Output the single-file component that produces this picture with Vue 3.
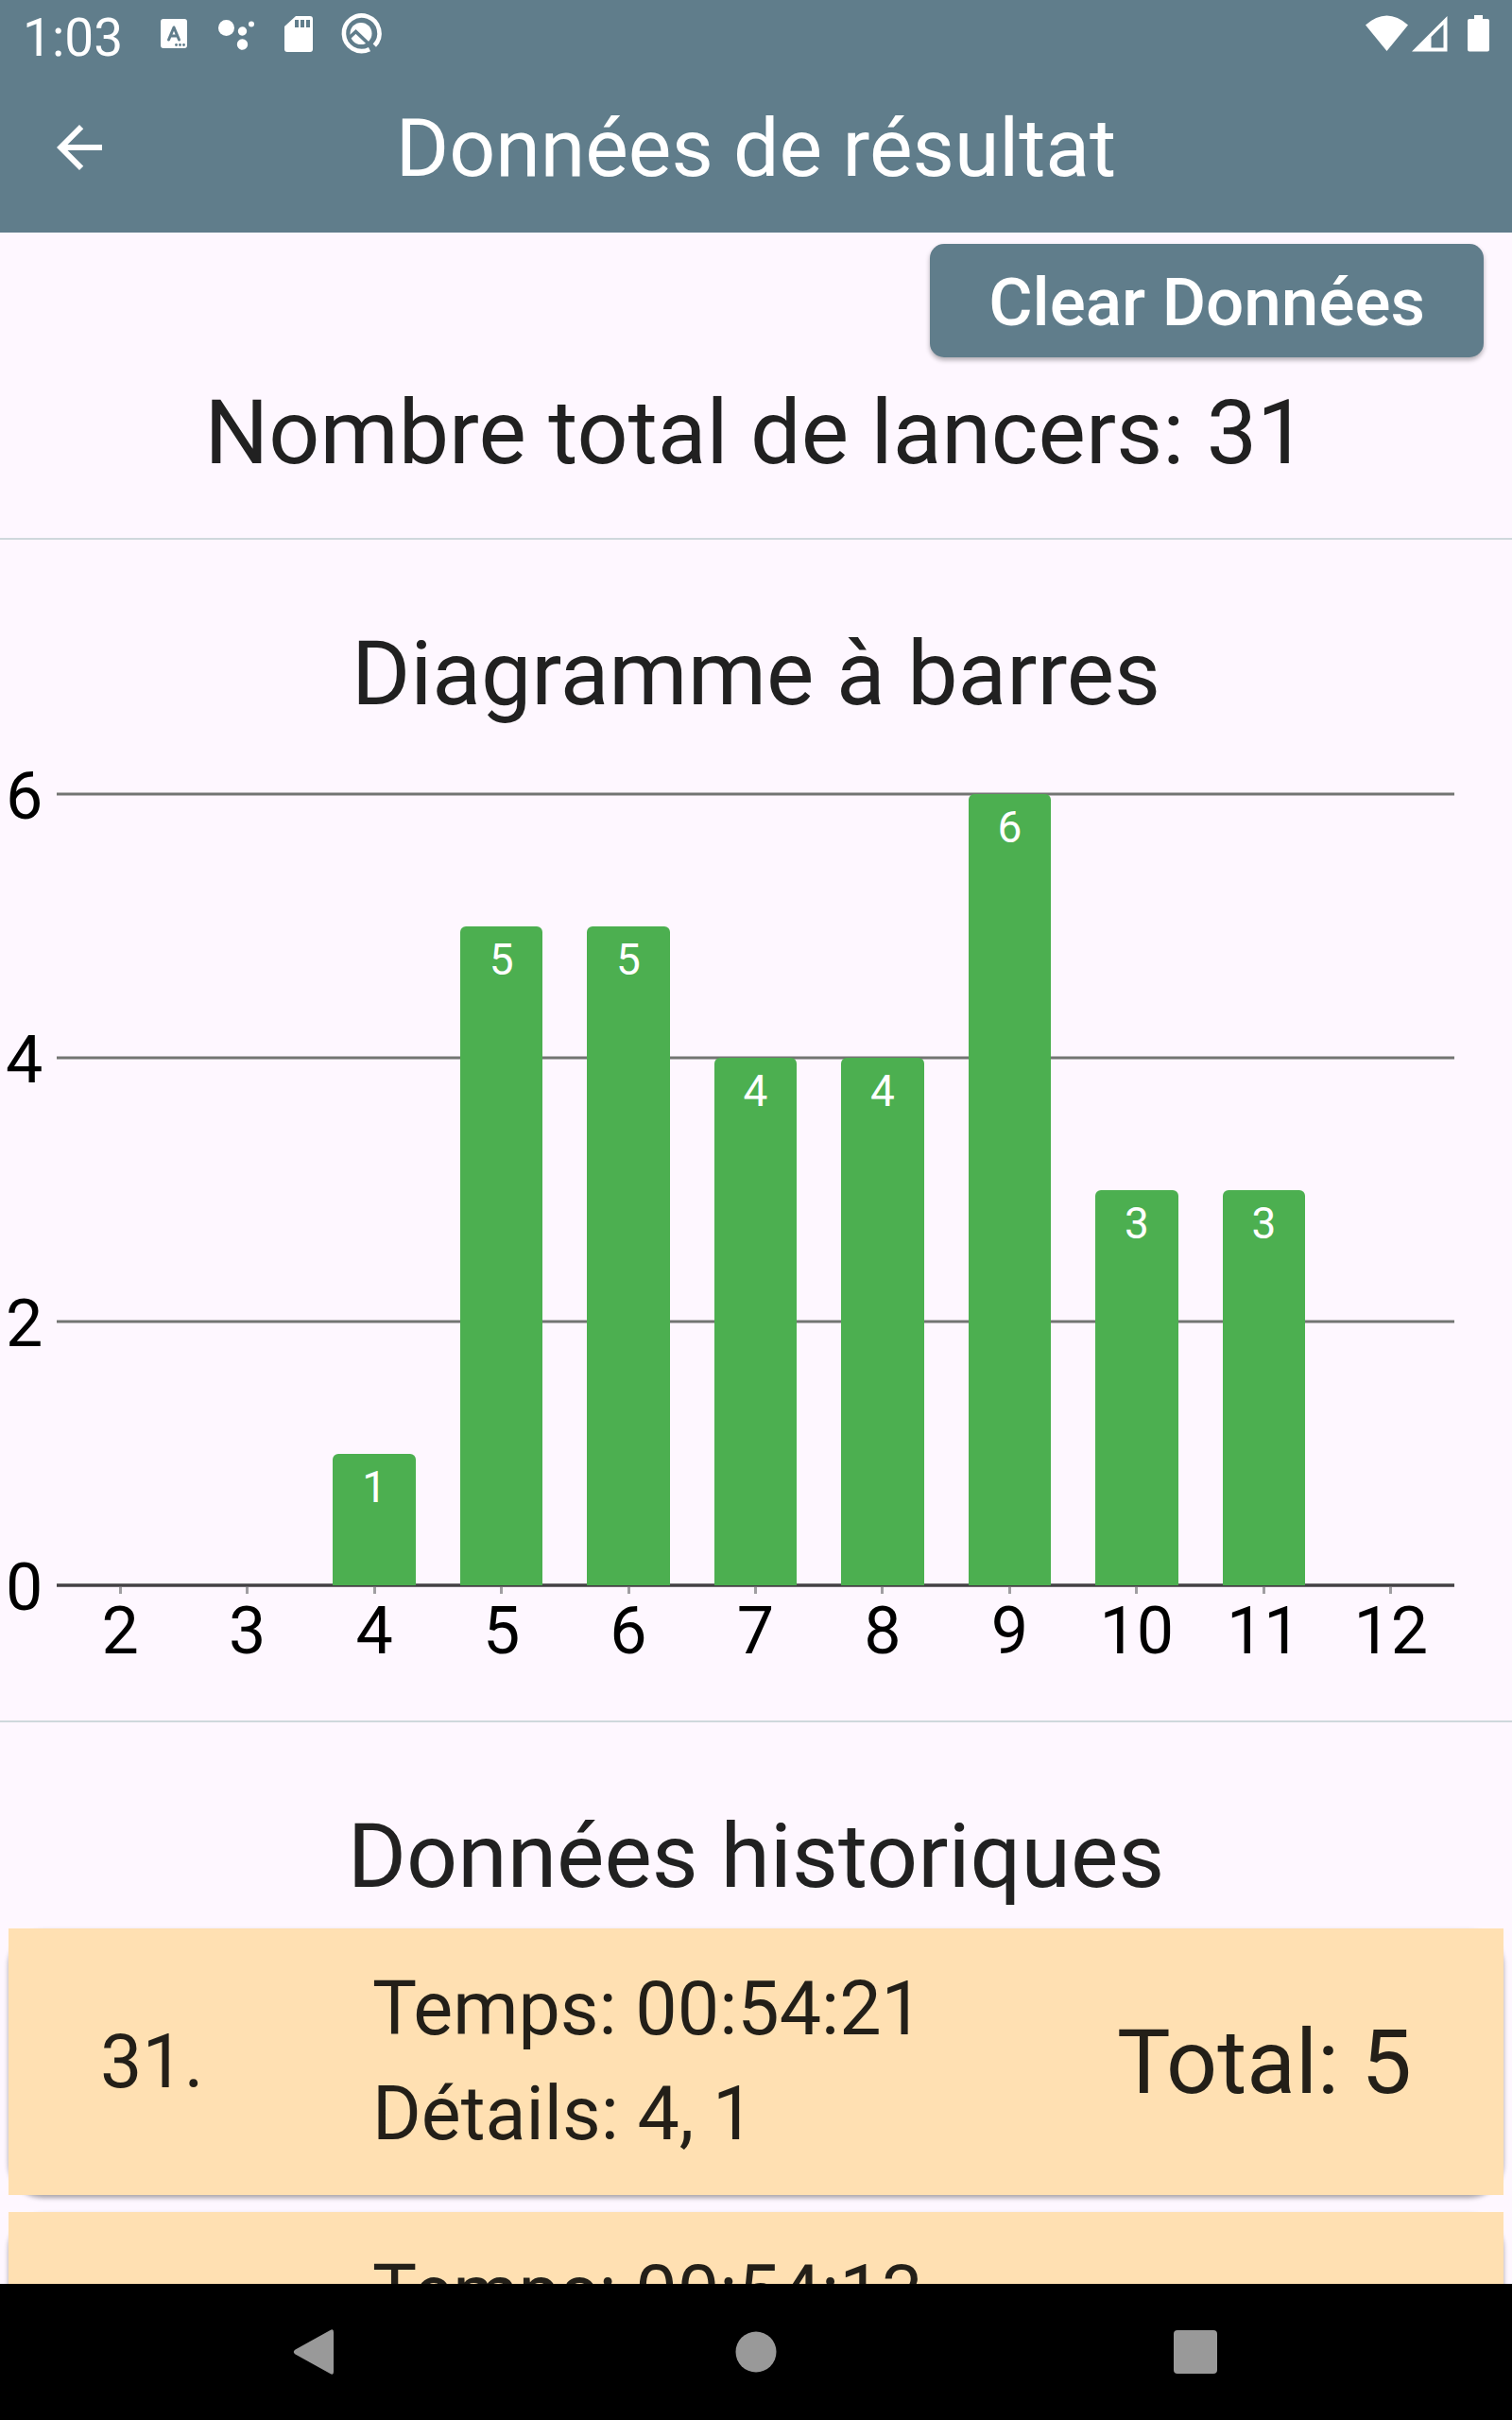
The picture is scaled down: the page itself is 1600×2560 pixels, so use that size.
<script setup>
import { ref, computed } from 'vue'

const sums = [2, 3, 4, 5, 6, 7, 8, 9, 10, 11, 12]
const counts = ref([0, 0, 1, 5, 5, 4, 4, 6, 3, 3, 0])
const axis = [6, 4, 2, 0]
const history = ref([
  { id: 31, time: '00:54:21', details: '4, 1', total: 5 },
  { id: 30, time: '00:54:13' }
])
const total = computed(() => counts.value.reduce((a, b) => a + b, 0))

function clearAll() {
  counts.value = counts.value.map(() => 0)
  history.value = []
}
</script>

<template>
  <div class="screen">
    <header>
      <div class="status">
        <span class="clock">1:03</span>
        <svg class="notes" width="260" height="66" viewBox="160 0 260 66" fill="#fff" aria-hidden="true">
          <rect x="170" y="20" width="28" height="31" rx="3" />
          <path d="M178.500 42l5.500-13 5.500 13M180.500 38h7" fill="none" stroke="#607d8b" stroke-width="3" stroke-linecap="round" stroke-linejoin="round" />
          <g fill="#607d8b"><circle cx="186.500" cy="47.500" r="1.400" /><circle cx="190.500" cy="47.500" r="1.400" /><circle cx="194.500" cy="47.500" r="1.400" /></g>
          <circle cx="239.500" cy="29.500" r="8.500" />
          <circle cx="256.500" cy="33" r="4.700" />
          <circle cx="266" cy="25.500" r="3" />
          <circle cx="256.500" cy="47" r="5.700" />
          <path d="M313 17h15a3 3 0 0 1 3 3v32a3 3 0 0 1-3 3h-24a3 3 0 0 1-3-3V28z" />
          <path d="M312 21h4v8h-4zM318 21h4v8h-4zM324 21h4v8h-4z" fill="#607d8b" />
          <path d="M396.300 48.200A18.800 18.800 0 1 0 391 52.100" fill="none" stroke="#fff" stroke-width="4.600" />
          <circle cx="382" cy="35.500" r="11.500" />
          <path d="M370 39.500l6.500-6L395.500 51.500" fill="none" stroke="#607d8b" stroke-width="3.600" />
        </svg>
        <svg class="signals" width="132" height="66" viewBox="1444 0 132 66" fill="#fff" aria-hidden="true">
          <path d="M1445 26.500Q1467.500 6.500 1490 26.500L1467.500 54z" />
          <path fill-rule="evenodd" d="M1494 54.500L1531.500 17v37.500zM1514.500 50.500h13V26l-13 13z" />
          <path d="M1560 16h9v4h5a2 2 0 0 1 2 2v30.500a2 2 0 0 1-2 2h-19a2 2 0 0 1-2-2V22a2 2 0 0 1 2-2h5z" />
        </svg>
      </div>
      <div class="bar-top">
        <button class="back" aria-label="Retour">
          <svg width="72" height="72" viewBox="0 0 24 24" fill="#fff"><path d="M20 11H7.830l5.590-5.590L12 4l-8 8 8 8 1.410-1.410L7.830 13H20v-2z" /></svg>
        </button>
        <h1>Données de résultat</h1>
      </div>
    </header>

    <main>
      <div class="actions">
        <button class="clear" @click="clearAll">Clear Données</button>
      </div>
      <p class="heading">Nombre total de lancers: {{ total }}</p>
      <hr />
      <h2 class="heading">Diagramme à barres</h2>
      <section class="chart">
        <div class="y-axis">
          <span v-for="n in axis" :key="n">{{ n }}</span>
        </div>
        <div class="plot">
          <div class="lines"><i v-for="n in axis" :key="n"></i></div>
          <div class="bars">
            <div v-for="(n, i) in counts" :key="i" class="slot">
              <div v-if="n" class="bar" :style="{ height: (n / 6) * 100 + '%' }">{{ n }}</div>
            </div>
          </div>
        </div>
        <div class="x-axis">
          <span v-for="s in sums" :key="s">{{ s }}</span>
        </div>
      </section>
      <hr />
      <h2 class="heading">Données historiques</h2>
      <ul>
        <li v-for="h in history" :key="h.id">
          <span class="rank">{{ h.id }}.</span>
          <div class="info">
            <p>Temps: {{ h.time }}</p>
            <p v-if="h.details">Détails: {{ h.details }}</p>
          </div>
          <span v-if="h.total" class="sum">Total: {{ h.total }}</span>
        </li>
      </ul>
    </main>

    <nav>
      <button aria-label="Précédent">
        <svg width="48" height="48" viewBox="0 0 48 48" fill="#999"><path d="M2.500 21.500L39.500 1Q43 -1 43 3V45Q43 49 39.500 47L2.500 26.500Q-1 24 2.500 21.500z" /></svg>
      </button>
      <button aria-label="Accueil">
        <svg width="48" height="48" viewBox="0 0 48 48" fill="#999"><circle cx="24" cy="24" r="21.500" /></svg>
      </button>
      <button aria-label="Applications récentes">
        <svg width="48" height="48" viewBox="0 0 48 48" fill="#999"><rect x="0" y="1" width="46" height="46" rx="4" /></svg>
      </button>
    </nav>
  </div>
</template>

<style>
body {
  margin: 0;
  background: #fef7ff;
}
</style>

<style scoped>
.screen {
  display: flex;
  flex-direction: column;
  height: 100vh;
  overflow: hidden;
  background: #fef7ff;
  color: #212121;
  font-family: Roboto, "Liberation Sans", sans-serif;
}
h1, h2, p, ul {
  margin: 0;
  padding: 0;
  font-weight: 400;
}
button {
  border: 0;
  padding: 0;
  background: none;
  color: #fff;
  font-family: inherit;
}
svg {
  display: block;
  flex: none;
}
header {
  flex: none;
  background: #607d8b;
  color: #fff;
}
.status {
  display: flex;
  align-items: center;
  height: 66px;
  padding: 0 24px;
}
.clock {
  flex: none;
  width: 136px;
  padding-top: 14px;
  font-size: 55px;
  line-height: 78px;
}
.signals {
  margin-left: auto;
}
.bar-top {
  display: grid;
  grid-template-columns: 168px 1fr 168px;
  align-items: center;
  height: 180px;
}
.back {
  justify-self: center;
}
h1 {
  padding-top: 2px;
  font-size: 86px;
  line-height: 120px;
  text-align: center;
}
main {
  position: relative;
  z-index: 0;
  flex: 1;
  min-height: 0;
  overflow: hidden;
}
.actions {
  display: flex;
  justify-content: flex-end;
  padding: 12px 30px;
}
.clear {
  height: 120px;
  padding: 4px 62px 0;
  border-radius: 15px;
  background: #607d8b;
  font-size: 71px;
  font-weight: 500;
  line-height: 100px;
  box-shadow: 0 3px 5px rgba(0, 0, 0, 0.3);
}
.heading {
  padding-top: 2px;
  font-size: 95px;
  line-height: 132px;
  text-align: center;
}
hr {
  height: 2px;
  margin: 45px 0 74px;
  border: 0;
  background: #cfd8dc;
}
.chart {
  display: grid;
  grid-template-columns: 60px 1fr;
  grid-template-rows: 841px auto;
  padding: 59px 61px 0 0;
}
.y-axis,
.lines {
  display: flex;
  flex-direction: column;
  justify-content: space-between;
}
.y-axis {
  padding-left: 6px;
  color: #000;
  font-size: 70px;
}
.y-axis span {
  height: 4px;
  line-height: 8px;
}
.plot {
  display: grid;
}
.lines,
.bars {
  grid-area: 1 / 1;
}
.lines i {
  box-sizing: border-box;
  height: 4px;
  border: solid #b9b5b9;
  border-width: 1px 0;
  background: #727572;
}
.lines i:last-child {
  border-color: #716d72;
  background: #434143;
}
.bars,
.x-axis {
  display: grid;
  grid-template-columns: repeat(11, 1fr);
}
.bars {
  padding: 2px 0;
}
.slot {
  display: flex;
  align-items: flex-end;
  justify-content: center;
}
.bar {
  width: 65%;
  border-radius: 6px 6px 0 0;
  background: #4caf50;
  color: #fff;
  font-size: 46px;
  line-height: 70px;
  text-align: center;
}
.x-axis {
  grid-column: 2;
  color: #000;
  font-size: 70px;
  line-height: 78px;
  text-align: center;
  text-indent: -5px;
}
.x-axis span::before {
  content: "";
  display: block;
  width: 3px;
  height: 7px;
  margin: 0 auto;
  background: #a09ea2;
}
.chart + hr {
  margin-top: 56px;
}
ul {
  display: grid;
  gap: 18px;
  padding: 10px 9px;
  list-style: none;
}
li {
  position: relative;
  display: grid;
  grid-template-columns: 288px 1fr auto;
  align-items: center;
  padding: 30px 97px;
  background: #ffe0b2;
  color: #231f18;
  font-size: 79px;
  line-height: 111px;
}
li::before {
  content: "";
  position: absolute;
  z-index: -1;
  inset: 0;
  border-radius: 36px;
  box-shadow: 0 3px 5px rgba(0, 0, 0, 0.35);
}
.info {
  min-height: 222px;
}
.sum {
  font-size: 95px;
}
nav {
  display: flex;
  flex: none;
  align-items: center;
  justify-content: space-between;
  height: 144px;
  padding: 0 310px;
  background: #000;
}
</style>
